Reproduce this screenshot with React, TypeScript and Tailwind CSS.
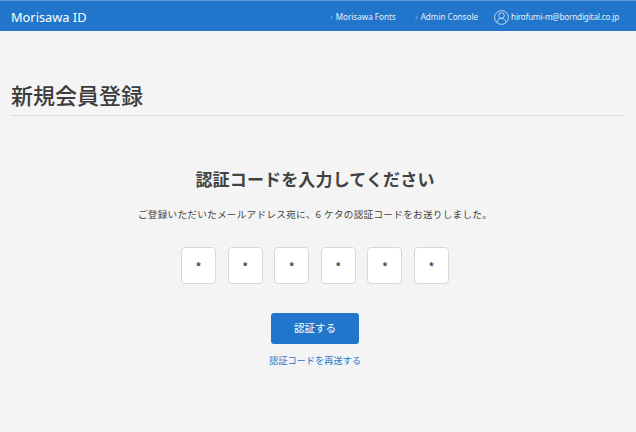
import { ChevronRight } from 'lucide-react';

const font = "font-['Noto_Sans','Noto_Sans_CJK_JP',sans-serif]";
const digits = ['*', '*', '*', '*', '*', '*'];

function UserIcon() {
    return (
        <svg width="15" height="15" viewBox="0 0 15 15" fill="none" stroke="currentColor" strokeWidth="0.8">
            <circle cx="7.5" cy="7.5" r="6.9" />
            <circle cx="7.5" cy="5.6" r="2.8" />
            <path d="M2.9 12.4c.5-2.6 2.3-4 4.6-4s4.1 1.4 4.6 4" />
        </svg>
    );
}

export default function App() {
    return (
        <div className={`${font} min-h-[432px] bg-[#f4f4f4] text-[#424242]`}>
            {/* Header */}
            <header className="h-[31px] pt-[2px] flex items-center justify-between bg-[#2176cc] border-t border-[#5b9bdc] pl-[11px] pr-[17px] text-white">
                <span className="text-[12.8px] leading-none">Morisawa ID</span>
                <div className="flex items-center text-[8.1px] leading-none text-[#e4effa]">
                    <a className="flex items-center gap-[1px] mr-[17px]">
                        <ChevronRight size={7} strokeWidth={1.5} />
                        Morisawa Fonts
                    </a>
                    <a className="flex items-center gap-[1px] mr-[16px]">
                        <ChevronRight size={7} strokeWidth={1.5} />
                        Admin Console
                    </a>
                    <span className="flex items-center gap-[2px] tracking-[-0.15px]">
                        <UserIcon />
                        hirofumi-m@borndigital.co.jp
                    </span>
                </div>
            </header>

            {/* Page title */}
            <div className="mx-[11px] mt-[50px] pb-[5px] border-b border-[#dedede]">
                <h1 className="text-[22px] leading-[29px] font-medium text-[#3c3c3c]">新規会員登録</h1>
            </div>

            {/* Verification */}
            <main className="flex flex-col items-center pr-[6px]">
                <h2 className="mt-[52px] text-[17px] leading-[24px] font-bold tracking-[0.15px]">認証コードを入力してください</h2>
                <p className="mt-[16px] text-[9.6px] leading-[14px] tracking-[0.29px]">
                    ご登録いただいたメールアドレス宛に、6 ケタの認証コードをお送りしました。
                </p>
                <div className="mt-[25px] flex gap-[11.6px]">
                    {digits.map((d, i) => (
                        <div
                            key={i}
                            className="w-[35px] h-[37px] flex items-center justify-center bg-white border border-[#d8d8d8] rounded-[4px] text-[9px] font-bold text-[#333]"
                        >
                            {d}
                        </div>
                    ))}
                </div>
                <button className="mt-[29px] w-[88px] h-[31px] bg-[#2176cc] rounded-[3px] text-white text-[10.5px]">
                    認証する
                </button>
                <a className="mt-[10px] text-[9.2px] leading-[14px] text-[#2176cc]">認証コードを再送する</a>
            </main>
        </div>
    );
}
